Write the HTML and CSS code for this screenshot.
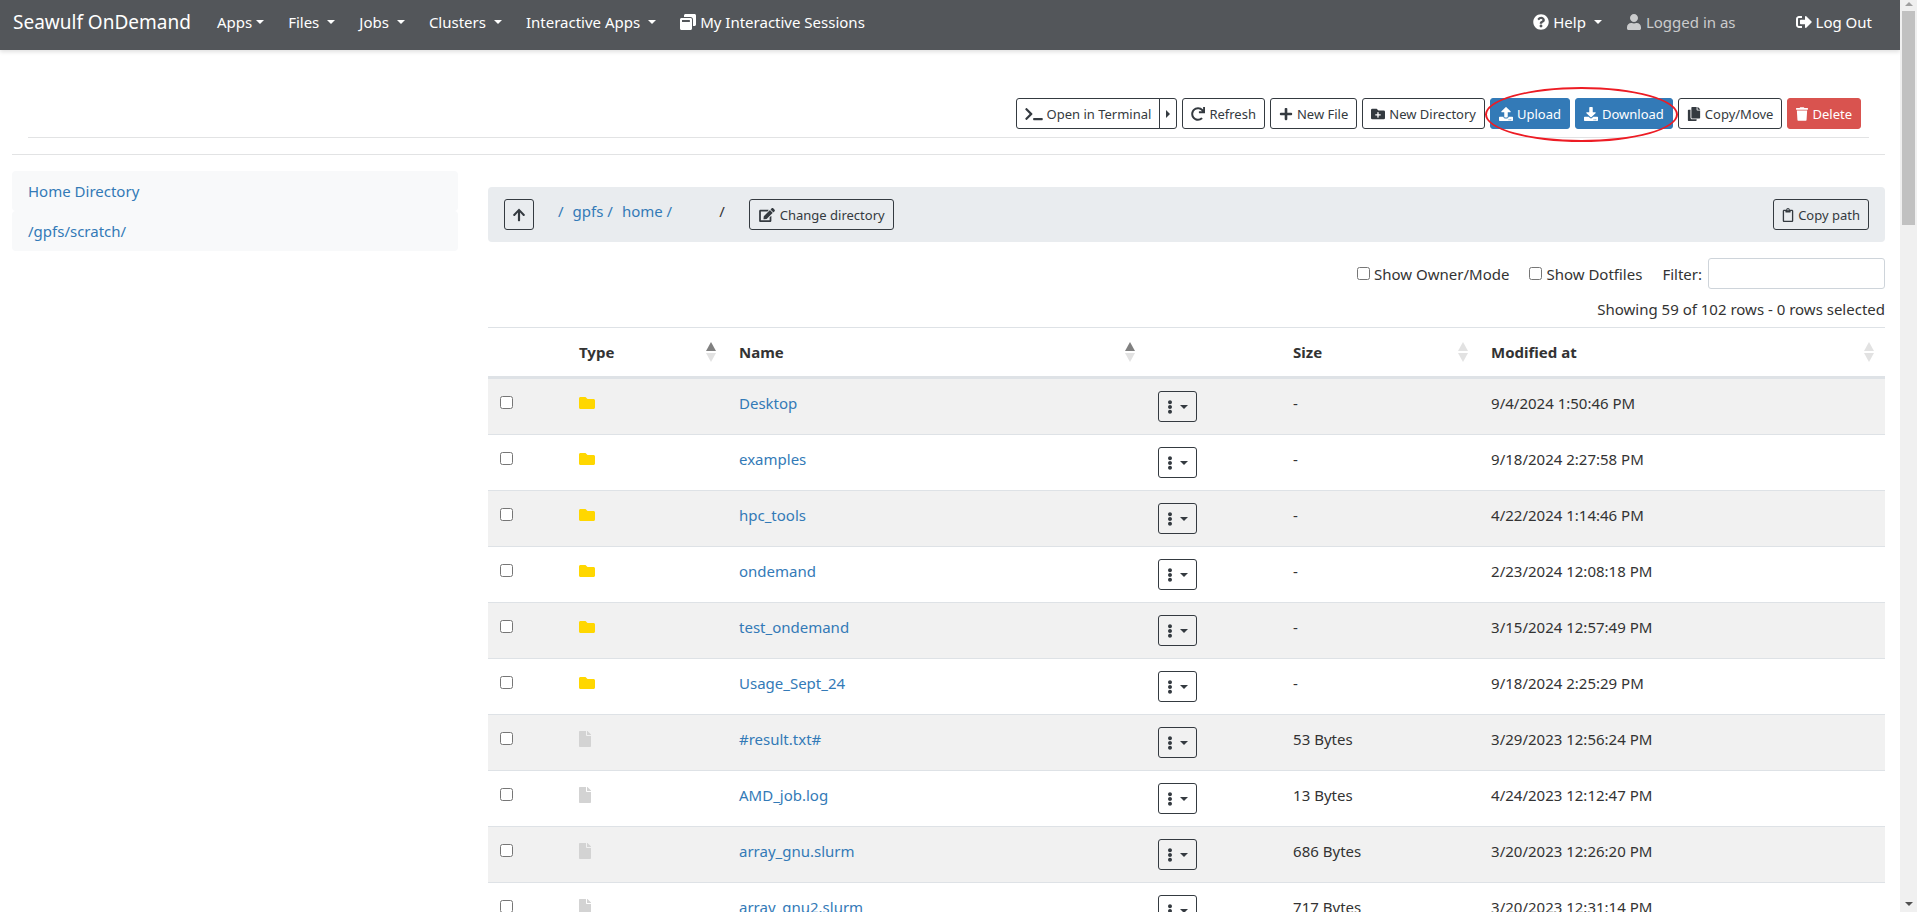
FILE: index.html
```html
<!DOCTYPE html>
<html lang="en">
<head>
<meta charset="utf-8">
<title>Seawulf OnDemand - Files</title>
<link rel="stylesheet" href="styles.css">
</head>
<body>
<svg class="sprite" aria-hidden="true">
  <symbol id="terminal" viewBox="0 0 640 512"><path d="M257.981 272.971L63.638 467.314c-9.373 9.373-24.569 9.373-33.941 0L7.029 444.647c-9.357-9.357-9.375-24.522-.04-33.901L161.011 256 6.99 101.255c-9.335-9.379-9.317-24.544.04-33.901l22.667-22.667c9.373-9.373 24.569-9.373 33.941 0L257.981 239.03c9.373 9.372 9.373 24.568 0 33.941zM640 456v-32c0-13.255-10.745-24-24-24H312c-13.255 0-24 10.745-24 24v32c0 13.255 10.745 24 24 24h304c13.255 0 24-10.745 24-24z"/></symbol>
  <symbol id="redo" viewBox="0 0 512 512"><path d="M500.33 0h-47.41a12 12 0 0 0-12 12.57l4 82.76A247.42 247.42 0 0 0 256 8C119.34 8 7.9 119.53 8 256.19 8.1 393.07 119.1 504 256 504a247.1 247.1 0 0 0 166.18-63.91 12 12 0 0 0 .48-17.43l-34-34a12 12 0 0 0-16.38-.55A176 176 0 1 1 402.1 157.8l-101.53-4.87a12 12 0 0 0-12.57 12v47.41a12 12 0 0 0 12 12h200.33a12 12 0 0 0 12-12V12a12 12 0 0 0-12-12z"/></symbol>
  <symbol id="plus" viewBox="0 0 448 512"><path d="M416 208H272V64c0-17.67-14.33-32-32-32h-32c-17.67 0-32 14.33-32 32v144H32c-17.67 0-32 14.33-32 32v32c0 17.67 14.33 32 32 32h144v144c0 17.67 14.33 32 32 32h32c17.67 0 32-14.33 32-32V304h144c17.67 0 32-14.33 32-32v-32c0-17.67-14.33-32-32-32z"/></symbol>
  <symbol id="folder" viewBox="0 0 512 512"><path d="M464 128H272l-64-64H48C21.49 64 0 85.49 0 112v288c0 26.51 21.49 48 48 48h416c26.51 0 48-21.49 48-48V176c0-26.51-21.49-48-48-48z"/></symbol>
  <symbol id="folder-plus" viewBox="0 0 512 512"><path d="M464,128H272L208,64H48A48,48,0,0,0,0,112V400a48,48,0,0,0,48,48H464a48,48,0,0,0,48-48V176A48,48,0,0,0,464,128ZM359.5,296a16,16,0,0,1-16,16h-64v64a16,16,0,0,1-16,16h-16a16,16,0,0,1-16-16V312h-64a16,16,0,0,1-16-16V280a16,16,0,0,1,16-16h64V200a16,16,0,0,1,16-16h16a16,16,0,0,1,16,16v64h64a16,16,0,0,1,16,16Z"/></symbol>
  <symbol id="upload" viewBox="0 0 512 512"><path d="M296 384h-80c-13.3 0-24-10.7-24-24V192h-87.7c-17.8 0-26.7-21.5-14.1-34.1L242.3 5.7c7.5-7.5 19.8-7.5 27.3 0l152.2 152.2c12.6 12.6 3.7 34.1-14.1 34.1H320v168c0 13.3-10.7 24-24 24zm216-8v112c0 13.3-10.7 24-24 24H24c-13.3 0-24-10.7-24-24V376c0-13.3 10.7-24 24-24h136v8c0 30.9 25.1 56 56 56h80c30.9 0 56-25.1 56-56v-8h136c13.3 0 24 10.7 24 24zm-124 88c0-11-9-20-20-20s-20 9-20 20 9 20 20 20 20-9 20-20zm64 0c0-11-9-20-20-20s-20 9-20 20 9 20 20 20 20-9 20-20z"/></symbol>
  <symbol id="download" viewBox="0 0 512 512"><path d="M216 0h80c13.3 0 24 10.7 24 24v168h87.7c17.8 0 26.7 21.5 14.1 34.1L269.7 378.3c-7.5 7.5-19.8 7.5-27.3 0L90.1 226.1c-12.6-12.6-3.7-34.1 14.1-34.1H192V24c0-13.3 10.7-24 24-24zm296 376v112c0 13.3-10.7 24-24 24H24c-13.3 0-24-10.7-24-24V376c0-13.3 10.7-24 24-24h146.7l49 49c20.1 20.1 52.5 20.1 72.6 0l49-49H488c13.3 0 24 10.7 24 24zm-124 88c0-11-9-20-20-20s-20 9-20 20 9 20 20 20 20-9 20-20zm64 0c0-11-9-20-20-20s-20 9-20 20 9 20 20 20 20-9 20-20z"/></symbol>
  <symbol id="copy" viewBox="0 0 448 512"><path d="M320 448v40c0 13.255-10.745 24-24 24H24c-13.255 0-24-10.745-24-24V120c0-13.255 10.745-24 24-24h72v296c0 30.879 25.121 56 56 56h168zm0-344V0H152c-13.255 0-24 10.745-24 24v368c0 13.255 10.745 24 24 24h272c13.255 0 24-10.745 24-24V128H344c-13.2 0-24-10.8-24-24zm120.971-31.029L375.029 7.029A24 24 0 0 0 358.059 0H352v96h96v-6.059a24 24 0 0 0-7.029-16.97z"/></symbol>
  <symbol id="trash" viewBox="0 0 448 512"><path d="M432 32H312l-9.4-18.7A24 24 0 0 0 281.1 0H166.8a23.72 23.72 0 0 0-21.4 13.3L136 32H16A16 16 0 0 0 0 48v32a16 16 0 0 0 16 16h416a16 16 0 0 0 16-16V48a16 16 0 0 0-16-16zM32 128l21.2 339a48 48 0 0 0 47.9 45h245.8a48 48 0 0 0 47.9-45L416 128z"/></symbol>
  <symbol id="arrow-up" viewBox="0 0 448 512"><path d="M34.9 289.5l-22.2-22.2c-9.4-9.4-9.4-24.6 0-33.9L207 39c9.4-9.4 24.6-9.4 33.9 0l194.3 194.3c9.4 9.4 9.4 24.6 0 33.9L413 289.4c-9.5 9.5-25 9.3-34.3-.4L264 168.6V456c0 13.3-10.7 24-24 24h-32c-13.3 0-24-10.7-24-24V168.6L69.2 289.1c-9.3 9.8-24.8 10-34.3.4z"/></symbol>
  <symbol id="edit" viewBox="0 0 576 512"><path d="M402.6 83.2l90.2 90.2c3.8 3.8 3.8 10 0 13.8L274.4 405.6l-92.8 10.3c-12.4 1.4-22.9-9.1-21.5-21.5l10.3-92.8L388.8 83.2c3.8-3.8 10-3.8 13.8 0zm162-22.9l-48.8-48.8c-15.2-15.2-39.9-15.2-55.2 0l-35.4 35.4c-3.8 3.8-3.8 10 0 13.8l90.2 90.2c3.8 3.8 10 3.8 13.8 0l35.4-35.4c15.2-15.3 15.2-40 0-55.2zM384 346.2V448H64V128h229.8c3.2 0 6.2-1.3 8.5-3.5l40-40c7.6-7.6 2.2-20.5-8.5-20.5H48C21.5 64 0 85.5 0 112v352c0 26.5 21.5 48 48 48h352c26.5 0 48-21.5 48-48V306.2c0-10.7-12.9-16-20.5-8.5l-40 40c-2.2 2.3-3.5 5.3-3.5 8.5z"/></symbol>
  <symbol id="clipboard" viewBox="0 0 384 512"><path d="M336 64h-80c0-35.3-28.7-64-64-64s-64 28.7-64 64H48C21.5 64 0 85.5 0 112v352c0 26.5 21.5 48 48 48h288c26.5 0 48-21.5 48-48V112c0-26.5-21.5-48-48-48zM192 40c13.3 0 24 10.7 24 24s-10.7 24-24 24-24-10.7-24-24 10.7-24 24-24zm144 418c0 3.3-2.7 6-6 6H54c-3.3 0-6-2.7-6-6V118c0-3.3 2.7-6 6-6h42v36c0 6.6 5.4 12 12 12h168c6.6 0 12-5.4 12-12v-36h42c3.3 0 6 2.7 6 6v340z"/></symbol>
  <symbol id="dots" viewBox="0 0 192 512"><path d="M96 184c39.8 0 72 32.2 72 72s-32.2 72-72 72-72-32.2-72-72 32.2-72 72-72zM24 80c0 39.8 32.2 72 72 72s72-32.2 72-72S135.8 8 96 8 24 40.2 24 80zm0 352c0 39.8 32.2 72 72 72s72-32.2 72-72-32.2-72-72-72-72 32.2-72 72z"/></symbol>
  <symbol id="file" viewBox="0 0 384 512"><path d="M224 136V0H24C10.7 0 0 10.7 0 24v464c0 13.3 10.7 24 24 24h336c13.3 0 24-10.7 24-24V160H248c-13.2 0-24-10.8-24-24zm160-14.1v6.1H256V0h6.1c6.4 0 12.5 2.5 17 7l97.9 98c4.5 4.5 7 10.6 7 16.9z"/></symbol>
  <symbol id="question" viewBox="0 0 512 512"><path d="M504 256c0 136.997-111.043 248-248 248S8 392.997 8 256C8 119.083 119.043 8 256 8s248 111.083 248 248zM262.655 90c-54.497 0-89.255 22.957-116.549 63.758-3.536 5.286-2.353 12.415 2.715 16.258l34.699 26.31c5.205 3.947 12.621 3.008 16.665-2.122 17.864-22.658 30.113-35.797 57.303-35.797 20.429 0 45.698 13.148 45.698 32.958 0 14.976-12.363 22.667-32.534 33.976C247.128 238.528 216 254.941 216 296v4c0 6.627 5.373 12 12 12h56c6.627 0 12-5.373 12-12v-1.333c0-28.462 83.186-29.647 83.186-106.667 0-58.002-60.165-102-116.531-102zM256 338c-25.365 0-46 20.635-46 46 0 25.364 20.635 46 46 46s46-20.636 46-46c0-25.365-20.635-46-46-46z"/></symbol>
  <symbol id="user" viewBox="0 0 448 512"><path d="M224 256c70.7 0 128-57.3 128-128S294.7 0 224 0 96 57.3 96 128s57.3 128 128 128zm89.6 32h-16.7c-22.2 10.2-46.9 16-72.9 16s-50.6-5.8-72.9-16h-16.7C60.2 288 0 348.2 0 422.4V464c0 26.5 21.5 48 48 48h352c26.5 0 48-21.5 48-48v-41.6c0-74.2-60.2-134.4-134.4-134.4z"/></symbol>
  <symbol id="sign-out" viewBox="0 0 512 512"><path d="M497 273L329 441c-15 15-41 4.5-41-17v-96H152c-13.3 0-24-10.7-24-24v-96c0-13.3 10.7-24 24-24h136V88c0-21.4 25.9-32 41-17l168 168c9.3 9.4 9.3 24.6 0 34zM192 436v-40c0-6.6-5.4-12-12-12H96c-17.7 0-32-14.3-32-32V160c0-17.7 14.3-32 32-32h84c6.6 0 12-5.4 12-12V76c0-6.6-5.4-12-12-12H96c-53 0-96 43-96 96v192c0 53 43 96 96 96h84c6.6 0 12-5.4 12-12z"/></symbol>
  <symbol id="windows" viewBox="0 0 512 512"><path d="M512 48v288c0 26.5-21.5 48-48 48h-48V176c0-44.1-35.9-80-80-80H128V48c0-26.5 21.5-48 48-48h288c26.5 0 48 21.5 48 48zM384 176v288c0 26.5-21.5 48-48 48H48c-26.5 0-48-21.5-48-48V176c0-26.5 21.5-48 48-48h288c26.5 0 48 21.5 48 48zm-68 28c0-6.6-5.4-12-12-12H76c-6.6 0-12 5.4-12 12v52h252v-52z"/></symbol>
  <symbol id="sort" viewBox="0 0 10 20"><path class="sort-up" d="M5 0L10 9H0z"/><path class="sort-down" d="M0 11h10L5 20z"/></symbol>
</svg>
<div class="window">
  <div class="page">
    <nav class="navbar">
      <a class="brand" href="#">Seawulf OnDemand</a>
      <ul class="nav">
        <li><a href="#">Apps<span class="caret"></span></a></li>
        <li><a href="#">Files <span class="caret spaced"></span></a></li>
        <li><a href="#">Jobs <span class="caret spaced"></span></a></li>
        <li><a href="#">Clusters <span class="caret spaced"></span></a></li>
        <li><a href="#">Interactive Apps <span class="caret spaced"></span></a></li>
        <li><a href="#"><svg class="icon"><use href="#windows"/></svg>My Interactive Sessions</a></li>
      </ul>
      <ul class="nav nav-right">
        <li><a href="#"><svg class="icon"><use href="#question"/></svg>Help <span class="caret spaced"></span></a></li>
        <li class="account"><svg class="icon"><use href="#user"/></svg>Logged in as</li>
        <li><a href="#"><svg class="icon"><use href="#sign-out"/></svg>Log Out</a></li>
      </ul>
    </nav>

    <main class="content">
      <div class="toolbar">
        <div class="split">
          <button class="btn" type="button"><svg class="icon wide"><use href="#terminal"/></svg>Open in Terminal</button>
          <button class="btn toggle" type="button" aria-label="Choose a host"><span class="caret right"></span></button>
        </div>
        <button class="btn" type="button"><svg class="icon"><use href="#redo"/></svg>Refresh</button>
        <button class="btn" type="button"><svg class="icon"><use href="#plus"/></svg>New File</button>
        <button class="btn" type="button"><svg class="icon"><use href="#folder-plus"/></svg>New Directory</button>
        <div class="transfer">
          <button class="btn primary" type="button"><svg class="icon"><use href="#upload"/></svg>Upload</button>
          <button class="btn primary" type="button"><svg class="icon"><use href="#download"/></svg>Download</button>
          <span class="highlight"></span>
        </div>
        <button class="btn" type="button"><svg class="icon"><use href="#copy"/></svg>Copy/Move</button>
        <button class="btn danger" type="button"><svg class="icon narrow"><use href="#trash"/></svg>Delete</button>
      </div>

      <div class="columns">
        <ul class="places">
          <li><a href="#">Home Directory</a></li>
          <li><a href="#">/gpfs/scratch/</a></li>
        </ul>

        <section class="files">
          <div class="pathbar">
            <button class="btn up" type="button" aria-label="Parent directory"><svg class="icon"><use href="#arrow-up"/></svg></button>
            <ol class="crumbs">
              <li><a href="#">/</a></li>
              <li><a href="#">gpfs /</a></li>
              <li><a href="#">home /</a></li>
              <li class="current">/</li>
            </ol>
            <button class="btn" type="button"><svg class="icon wide"><use href="#edit"/></svg>Change directory</button>
            <button class="btn copy-path" type="button"><svg class="icon narrow"><use href="#clipboard"/></svg>Copy path</button>
          </div>

          <div class="filters">
            <label class="check"><input type="checkbox">Show Owner/Mode</label>
            <label class="check"><input type="checkbox">Show Dotfiles</label>
            <label class="filter">Filter: <input type="search"></label>
          </div>
          <p class="status">Showing 59 of 102 rows - 0 rows selected</p>

          <table class="listing">
            <colgroup><col class="c-check"><col class="c-type"><col class="c-name"><col class="c-menu"><col class="c-size"><col></colgroup>
            <thead>
              <tr>
                <th></th>
                <th><div class="head">Type<svg class="sort asc"><use href="#sort"/></svg></div></th>
                <th><div class="head">Name<svg class="sort asc"><use href="#sort"/></svg></div></th>
                <th></th>
                <th><div class="head">Size<svg class="sort"><use href="#sort"/></svg></div></th>
                <th><div class="head">Modified at<svg class="sort"><use href="#sort"/></svg></div></th>
              </tr>
            </thead>
            <tbody>
              <tr>
                <td><input type="checkbox" aria-label="Select Desktop"></td>
                <td><svg class="icon dir"><use href="#folder"/></svg></td>
                <td><a href="#">Desktop</a></td>
                <td><button class="btn menu" type="button" aria-label="Actions"><svg class="icon"><use href="#dots"/></svg><span class="caret"></span></button></td>
                <td>-</td>
                <td>9/4/2024 1:50:46 PM</td>
              </tr>
              <tr>
                <td><input type="checkbox" aria-label="Select examples"></td>
                <td><svg class="icon dir"><use href="#folder"/></svg></td>
                <td><a href="#">examples</a></td>
                <td><button class="btn menu" type="button" aria-label="Actions"><svg class="icon"><use href="#dots"/></svg><span class="caret"></span></button></td>
                <td>-</td>
                <td>9/18/2024 2:27:58 PM</td>
              </tr>
              <tr>
                <td><input type="checkbox" aria-label="Select hpc_tools"></td>
                <td><svg class="icon dir"><use href="#folder"/></svg></td>
                <td><a href="#">hpc_tools</a></td>
                <td><button class="btn menu" type="button" aria-label="Actions"><svg class="icon"><use href="#dots"/></svg><span class="caret"></span></button></td>
                <td>-</td>
                <td>4/22/2024 1:14:46 PM</td>
              </tr>
              <tr>
                <td><input type="checkbox" aria-label="Select ondemand"></td>
                <td><svg class="icon dir"><use href="#folder"/></svg></td>
                <td><a href="#">ondemand</a></td>
                <td><button class="btn menu" type="button" aria-label="Actions"><svg class="icon"><use href="#dots"/></svg><span class="caret"></span></button></td>
                <td>-</td>
                <td>2/23/2024 12:08:18 PM</td>
              </tr>
              <tr>
                <td><input type="checkbox" aria-label="Select test_ondemand"></td>
                <td><svg class="icon dir"><use href="#folder"/></svg></td>
                <td><a href="#">test_ondemand</a></td>
                <td><button class="btn menu" type="button" aria-label="Actions"><svg class="icon"><use href="#dots"/></svg><span class="caret"></span></button></td>
                <td>-</td>
                <td>3/15/2024 12:57:49 PM</td>
              </tr>
              <tr>
                <td><input type="checkbox" aria-label="Select Usage_Sept_24"></td>
                <td><svg class="icon dir"><use href="#folder"/></svg></td>
                <td><a href="#">Usage_Sept_24</a></td>
                <td><button class="btn menu" type="button" aria-label="Actions"><svg class="icon"><use href="#dots"/></svg><span class="caret"></span></button></td>
                <td>-</td>
                <td>9/18/2024 2:25:29 PM</td>
              </tr>
              <tr>
                <td><input type="checkbox" aria-label="Select #result.txt#"></td>
                <td><svg class="icon doc"><use href="#file"/></svg></td>
                <td><a href="#">#result.txt#</a></td>
                <td><button class="btn menu" type="button" aria-label="Actions"><svg class="icon"><use href="#dots"/></svg><span class="caret"></span></button></td>
                <td>53 Bytes</td>
                <td>3/29/2023 12:56:24 PM</td>
              </tr>
              <tr>
                <td><input type="checkbox" aria-label="Select AMD_job.log"></td>
                <td><svg class="icon doc"><use href="#file"/></svg></td>
                <td><a href="#">AMD_job.log</a></td>
                <td><button class="btn menu" type="button" aria-label="Actions"><svg class="icon"><use href="#dots"/></svg><span class="caret"></span></button></td>
                <td>13 Bytes</td>
                <td>4/24/2023 12:12:47 PM</td>
              </tr>
              <tr>
                <td><input type="checkbox" aria-label="Select array_gnu.slurm"></td>
                <td><svg class="icon doc"><use href="#file"/></svg></td>
                <td><a href="#">array_gnu.slurm</a></td>
                <td><button class="btn menu" type="button" aria-label="Actions"><svg class="icon"><use href="#dots"/></svg><span class="caret"></span></button></td>
                <td>686 Bytes</td>
                <td>3/20/2023 12:26:20 PM</td>
              </tr>
              <tr>
                <td><input type="checkbox" aria-label="Select array_gnu2.slurm"></td>
                <td><svg class="icon doc"><use href="#file"/></svg></td>
                <td><a href="#">array_gnu2.slurm</a></td>
                <td><button class="btn menu" type="button" aria-label="Actions"><svg class="icon"><use href="#dots"/></svg><span class="caret"></span></button></td>
                <td>717 Bytes</td>
                <td>3/20/2023 12:31:14 PM</td>
              </tr>
            </tbody>
          </table>
        </section>
      </div>
    </main>
  </div>
  <div class="scrollbar" aria-hidden="true">
    <span class="scroll-up"></span>
    <span class="thumb"></span>
    <span class="scroll-down"></span>
  </div>
</div>
</body>
</html>
```

FILE: styles.css
```css
* { box-sizing: border-box; }

body {
  margin: 0;
  background: #fff;
  color: #333;
  font: 15px/24px "Segoe UI", "Noto Sans", sans-serif;
}

ul, ol { margin: 0; padding: 0; list-style: none; }
a { color: #337ab7; text-decoration: none; }
button, input { font: inherit; color: inherit; }
input[type="checkbox"] { width: 13px; height: 13px; margin: 0; }

.sprite { position: absolute; width: 0; height: 0; }

.window {
  display: grid;
  grid-template-columns: 1fr 17px;
  height: 100vh;
  overflow: hidden;
}
.page { min-width: 0; overflow: hidden; }

.icon {
  flex: none;
  width: 16px;
  height: 16px;
  fill: currentColor;
}

.caret {
  border: 4px solid transparent;
  border-top-color: currentColor;
  border-bottom: 0;
  margin-left: 4px;
}
.caret.spaced { margin-left: 8px; }
.caret.right {
  border: 4px solid transparent;
  border-left-color: currentColor;
  border-right: 0;
  margin: 0;
}

/* Top navigation */
.navbar {
  display: flex;
  align-items: center;
  height: 50px;
  padding: 0 28px 6px 13px;
  background: #53565a;
  color: #fff;
  box-shadow: 0 2px 4px rgba(0, 0, 0, 0.12);
}
.navbar a { color: inherit; }
.brand { margin-right: 26px; font-size: 19px; }
.nav { display: flex; gap: 24px; white-space: nowrap; }
.nav a, .account { display: flex; align-items: center; }
.nav .icon { margin-right: 4px; }
.nav-right { margin-left: auto; }
.account { color: #cbcccd; margin-right: 36px; }

/* Buttons */
.btn {
  display: inline-flex;
  align-items: center;
  justify-content: center;
  gap: 4px;
  height: 31px;
  padding: 0 8px;
  border: 1px solid #343a40;
  border-radius: 3px;
  background: transparent;
  color: #343a40;
  font-size: 13px;
  line-height: 20px;
  white-space: nowrap;
}
.btn .icon { width: 14px; height: 14px; }
.btn .icon.wide { width: 18px; }
.btn .icon.narrow { width: 12px; }
.btn.primary { background: #337ab7; border-color: #337ab7; color: #fff; }
.btn.danger { background: #d9534f; border-color: #d9534f; color: #fff; }

.content { padding: 48px 15px 0 12px; }

.toolbar {
  display: flex;
  justify-content: flex-end;
  gap: 5px;
  margin: 0 16px;
  padding: 0 8px 8px;
  border-bottom: 1px solid #e2e3e4;
}
.split { display: flex; }
.split .btn:first-child { border-radius: 3px 0 0 3px; }
.split .toggle { width: 18px; margin-left: -1px; padding: 0; border-radius: 0 3px 3px 0; }
.transfer { position: relative; display: flex; gap: 5px; }
.highlight {
  position: absolute;
  inset: -11px -5px -13px;
  border: 2px solid #ed1c24;
  border-radius: 50%;
  pointer-events: none;
}

.columns {
  display: grid;
  grid-template-columns: 446fr 1397fr;
  gap: 30px;
  margin-top: 16px;
  padding-top: 16px;
  border-top: 1px solid #e2e3e4;
}

.places li {
  padding: 8px 16px;
  border-radius: 4px;
  background: #f8f9fa;
}

.files { min-width: 0; padding-top: 16px; }
.pathbar {
  display: flex;
  align-items: flex-start;
  padding: 12px 16px;
  border-radius: 4px;
  background: #e9ecef;
}
.pathbar .up { width: 30px; padding: 0; }
.crumbs { display: flex; gap: 9px; margin: 0 24px; }
.crumbs .current { margin-left: 38px; }
.copy-path { margin-left: auto; }

.filters {
  display: flex;
  align-items: center;
  justify-content: flex-end;
  gap: 20px;
  margin-top: 16px;
}
.check { display: flex; align-items: center; gap: 4px; }
.filter { display: flex; align-items: center; gap: 6px; }
.filter input {
  width: 177px;
  height: 31px;
  padding: 4px 8px;
  border: 1px solid #ced4da;
  border-radius: 3px;
  background: #fff;
}
.status { margin: 8px 0 6px; text-align: right; }

/* File listing */
.listing {
  width: 100%;
  border-collapse: separate;
  border-spacing: 0;
  table-layout: fixed;
}
.c-check { width: 79px; }
.c-type { width: 160px; }
.c-name { width: 30%; }
.c-menu { width: 135px; }
.c-size { width: 198px; }
.listing th, .listing td {
  padding: 12px;
  border-top: 1px solid #dee2e6;
  text-align: left;
  vertical-align: top;
}
.listing th {
  padding-right: 11px;
  border-bottom: 2px solid #dee2e6;
  font-weight: 700;
}
.listing tbody tr { height: 56px; }
.listing tbody tr:nth-child(odd) { background: #f1f1f1; }
.listing td input { display: block; margin-top: 5px; }
.listing td .icon { display: block; margin-top: 4px; }
.dir { color: #ffd700; }
.listing .doc { width: 12px; color: lightgray; }
.head { display: flex; align-items: center; justify-content: space-between; }
.sort { width: 10px; height: 20px; fill: #e2e2e2; color: #e2e2e2; }
.sort.asc { color: #808080; }
.sort-up { fill: currentColor; }
.menu { display: flex; gap: 3px; width: 39px; padding: 0; }
.listing .menu .icon { width: 6px; margin: 0; }

/* Window scrollbar */
.scrollbar {
  display: flex;
  flex-direction: column;
  align-items: center;
  background: #f0f0f0;
}
.scroll-up, .scroll-down { border: 4px solid transparent; }
.scroll-up { margin-top: 2px; border-top: 0; border-bottom-color: #a0a0a0; }
.thumb { width: 13px; height: 214px; margin-top: 5px; background: #c1c1c1; }
.scroll-down { margin: auto 0 6px; border-bottom: 0; border-top-color: #505050; }
```
